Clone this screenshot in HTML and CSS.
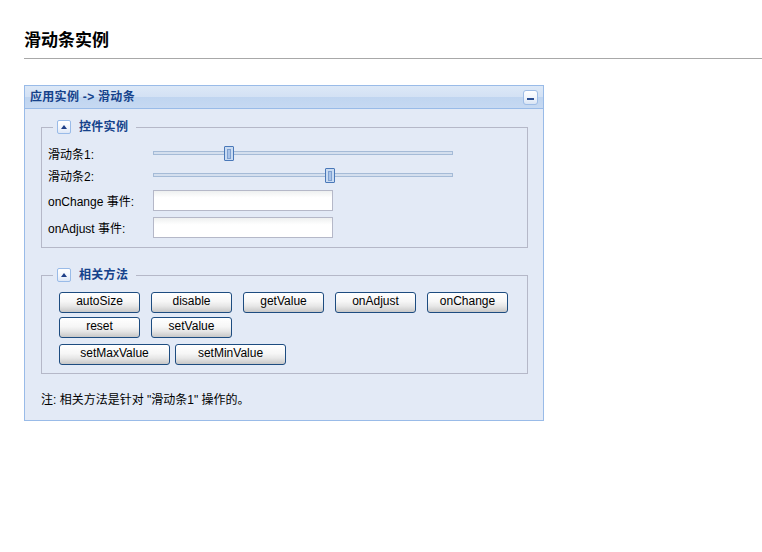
FILE: index.html
```html
<!DOCTYPE html>
<html>
<head>
<meta charset="utf-8">
<link rel="stylesheet" href="styles.css">
</head>
<body>
<div class="page">
  <h1 class="title">滑动条实例</h1>
  <div class="panel">
    <div class="panel-header">
      <span class="panel-title">应用实例 -&gt; 滑动条</span>
      <span class="tool-collapse"><span class="minus"></span></span>
    </div>
    <div class="panel-body">
      <fieldset class="fs fs-demo">
        <legend class="fs-legend"><span class="toggle"><span class="tri"></span></span><span class="legend-text">控件实例</span></legend>
        <div class="fs-content demo-content">
          <div class="row slider-row">
            <span class="label">滑动条1:</span>
            <div class="slider"><div class="track"></div><div class="thumb" style="left:71px"><span class="grip"></span></div></div>
          </div>
          <div class="row slider-row">
            <span class="label">滑动条2:</span>
            <div class="slider"><div class="track"></div><div class="thumb" style="left:172px"><span class="grip"></span></div></div>
          </div>
          <div class="row input-row first-input">
            <span class="label">onChange 事件:</span>
            <input class="text" type="text">
          </div>
          <div class="row input-row second-input">
            <span class="label">onAdjust 事件:</span>
            <input class="text" type="text">
          </div>
        </div>
      </fieldset>
      <fieldset class="fs fs-methods">
        <legend class="fs-legend"><span class="toggle"><span class="tri"></span></span><span class="legend-text">相关方法</span></legend>
        <div class="fs-content methods-content">
          <div class="btn-row row-a">
            <button class="btn">autoSize</button>
            <button class="btn">disable</button>
            <button class="btn">getValue</button>
            <button class="btn">onAdjust</button>
            <button class="btn">onChange</button>
          </div>
          <div class="btn-row row-b">
            <button class="btn">reset</button>
            <button class="btn">setValue</button>
          </div>
          <div class="btn-row row-c">
            <button class="btn btn-wide">setMaxValue</button>
            <button class="btn btn-wide">setMinValue</button>
          </div>
        </div>
      </fieldset>
      <p class="note">注: 相关方法是针对 "滑动条1" 操作的。</p>
    </div>
  </div>
</div>
</body>
</html>
```

FILE: styles.css
```css
html, body {
  margin: 0;
  padding: 0;
  background: #ffffff;
}
body {
  font-family: "Liberation Sans", "Noto Sans CJK SC", sans-serif;
  font-size: 12px;
  color: #000;
}
.page {
  padding: 30px 0 0 24px;
}
.title {
  margin: 0;
  font-size: 17px;
  line-height: 22px;
  font-weight: bold;
  padding-bottom: 6px;
  border-bottom: 1px solid #a8a8a8;
}
.panel {
  margin-top: 26px;
  width: 518px;
  border: 1px solid #99bbe8;
  background: #e3eaf6;
}
.panel-header {
  height: 22px;
  border-bottom: 1px solid #99bbe8;
  background: linear-gradient(#dce8f7 0%, #d3e1f4 50%, #c0d5f0 52%, #c6d9f2 100%);
  display: flex;
  justify-content: space-between;
  align-items: flex-start;
  padding-left: 5px;
}
.panel-title {
  font-weight: bold;
  color: #15428b;
  line-height: 22px;
  letter-spacing: 0.3px;
}
.tool-collapse {
  width: 13px;
  height: 13px;
  margin: 4px 5px 0 0;
  border: 1px solid #9fbde6;
  border-radius: 3px;
  background: linear-gradient(#ffffff, #eef3fb 60%, #d8e4f5);
  display: flex;
  align-items: center;
  justify-content: center;
}
.minus {
  display: block;
  width: 7px;
  height: 2px;
  margin-top: 2px;
  background: #2c4f93;
}
.panel-body {
  padding: 0 15px 12px 16px;
}
.fs {
  margin: 0;
  padding: 0;
  border: 1px solid #b5b8c8;
  min-width: 0;
}
.fs-demo {
  margin-top: 10px;
}
.fs-methods {
  margin-top: 19px;
}
.fs-legend {
  margin-left: 11px;
  padding: 0 4px;
  height: 16px;
  display: flex;
  align-items: center;
}
.toggle {
  width: 12px;
  height: 12px;
  border: 1px solid #99bbe8;
  border-radius: 2px;
  background: linear-gradient(#ffffff, #f1f5fc 60%, #dde7f6);
  display: flex;
  align-items: center;
  justify-content: center;
}
.tri {
  width: 0;
  height: 0;
  border-left: 3px solid transparent;
  border-right: 3px solid transparent;
  border-bottom: 4px solid #1f3f88;
}
.legend-text {
  margin-left: 8px;
  margin-right: 4px;
  font-weight: bold;
  color: #15428b;
  line-height: 14px;
  letter-spacing: 0.3px;
}
.demo-content {
  padding: 7px 6px 9px 6px;
}
.row {
  display: flex;
  align-items: center;
}
.label {
  width: 105px;
  flex: none;
}
.slider-row {
  height: 22px;
}
.slider {
  position: relative;
  width: 300px;
  height: 22px;
}
.track {
  position: absolute;
  left: 0;
  right: 0;
  top: 9px;
  height: 2px;
  border: 1px solid #a5bbd7;
  background: #d4dfee;
}
.thumb {
  position: absolute;
  top: 4px;
  width: 8px;
  height: 13px;
  border: 1px solid #4a78b8;
  border-radius: 1px;
  background: #c9dbf2;
  display: flex;
  align-items: center;
  justify-content: center;
}
.grip {
  display: block;
  width: 2px;
  height: 8px;
  border: 1px solid #7d9fd0;
  background: #a9c3e8;
}
.input-row {
  height: 21px;
}
.first-input {
  margin-top: 4px;
}
.second-input {
  margin-top: 6px;
}
.text {
  box-sizing: border-box;
  width: 180px;
  height: 21px;
  margin: 0;
  padding: 1px 3px;
  border: 1px solid #b5b8c8;
  background: linear-gradient(#eef0f0, #ffffff 35%);
  font: 12px "Liberation Sans", "Noto Sans CJK SC", sans-serif;
  outline: none;
}
.methods-content {
  padding: 9px 10px 8px 17px;
}
.btn-row {
  display: flex;
}
.row-a, .row-b {
  gap: 11px;
}
.row-b {
  margin-top: 4px;
}
.row-c {
  margin-top: 6px;
  gap: 5px;
}
.btn {
  box-sizing: border-box;
  width: 81px;
  height: 21px;
  margin: 0;
  padding: 0 0 2px 0;
  border: 1px solid #1d4c80;
  border-radius: 3px;
  background: linear-gradient(#ffffff 0%, #f6f6f6 45%, #e6e6e6 70%, #c7c7c7 100%);
  font: 12px "Liberation Sans", "Noto Sans CJK SC", sans-serif;
  color: #000;
  text-align: center;
  line-height: 17px;
}
.btn-wide {
  width: 111px;
}
.note {
  margin: 18px 0 0 0;
  line-height: 16px;
}
```
